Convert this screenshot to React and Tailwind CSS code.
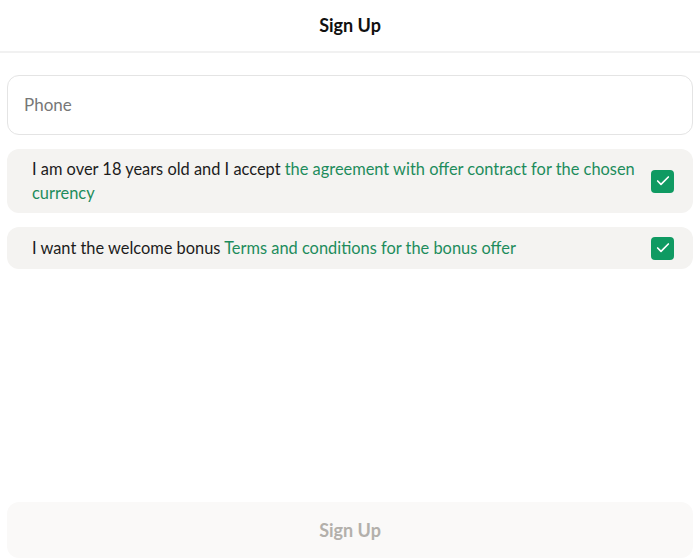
import { Check } from 'lucide-react';

const font = { fontFamily: '"Segoe UI", Lato, "Noto Sans", sans-serif' };

const CheckRow = ({ children, py }) => (
  <div className={`flex items-center gap-2 rounded-xl bg-[#f4f3f1] pl-[25px] pr-[19px] ${py}`}>
    <p className="flex-1 text-[16.4px] leading-6 text-[#1c1c1c]">{children}</p>
    <span className="flex h-[23px] w-[23px] shrink-0 items-center justify-center rounded-[4px] bg-[#0f9a62]">
      <Check className="h-4 w-4 text-white" strokeWidth={2.5} />
    </span>
  </div>
);

export default function App() {
  return (
    <div className="flex h-[559px] flex-col bg-white" style={font}>
      {/* Header */}
      <header className="flex h-[53px] items-center justify-center border-b-2 border-[#f1f1f1]">
        <h1 className="text-[18px] font-bold text-[#111]">Sign Up</h1>
      </header>

      <div className="flex flex-col gap-[14px] px-[7px] pt-[22px]">
        <div className="flex h-[60px] items-center rounded-xl border border-[#e4e4e4] px-[16px]">
          <input
            className="w-full bg-transparent text-[17px] text-[#333] outline-none placeholder:text-[#777]"
            placeholder="Phone"
          />
        </div>

        <CheckRow py="py-2">
          I am over 18 years old and I accept{' '}
          <span className="text-[#1d8c5c]">the agreement with offer contract for the chosen currency</span>
        </CheckRow>

        <CheckRow py="py-[9px]">
          I want the welcome bonus{' '}
          <span className="text-[#1d8c5c]">Terms and conditions for the bonus offer</span>
        </CheckRow>
      </div>

      {/* Footer */}
      <div className="mt-auto px-[7px] pb-[1px]">
        <button className="flex h-[56px] w-full items-center justify-center rounded-xl bg-[#faf9f8] text-[18px] font-bold text-[#b3b0ab]">
          Sign Up
        </button>
      </div>
    </div>
  );
}
